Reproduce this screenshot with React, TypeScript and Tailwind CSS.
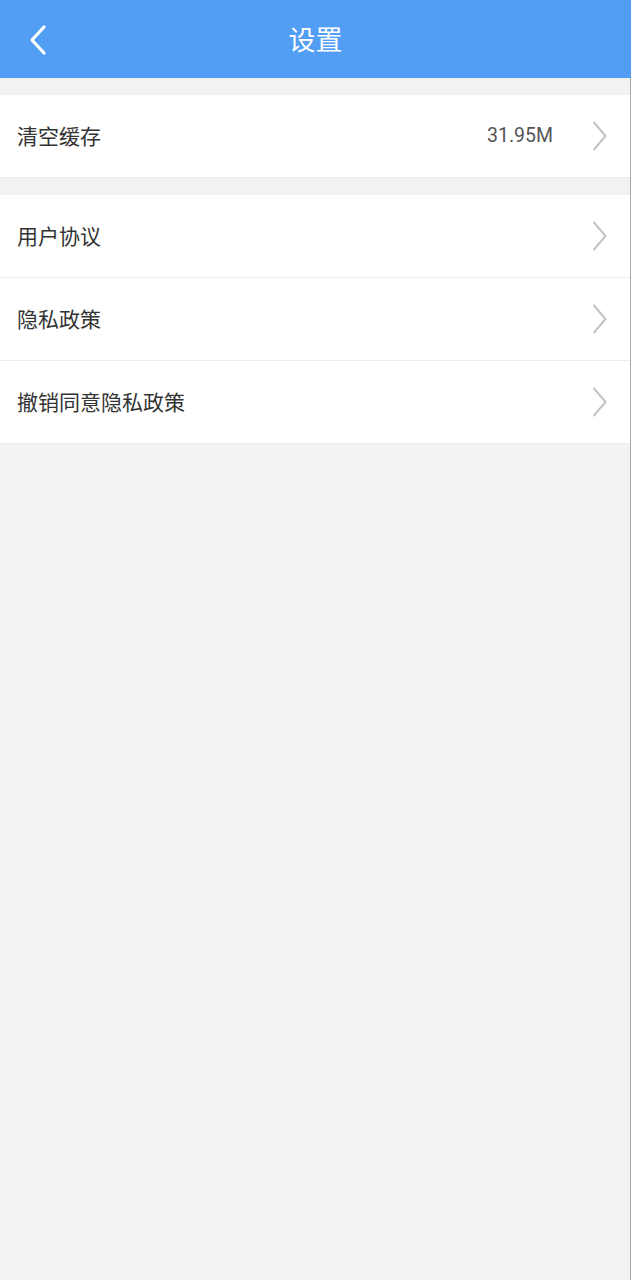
import React from "react";

const Chevron = () => (
  <svg width="16" height="30" viewBox="0 0 16 30" className="shrink-0">
    <path d="M2 1.5 L13.5 15 L2 28.5" fill="none" stroke="#c4c4c4" strokeWidth="2" strokeLinecap="round" strokeLinejoin="round" />
  </svg>
);

const Row = ({ label, value }: { label: string; value?: string }) => (
  <div className="flex h-[83px] items-center border-b border-[#ececec] bg-white pl-[17px] pr-[22px]">
    <span className="flex-1 text-[21px] text-[#333333]">{label}</span>
    {value && <span className="mr-[39px] text-[19.5px] text-[#555555] font-['Roboto',sans-serif]">{value}</span>}
    <Chevron />
  </div>
);

export default function App() {
  return (
    <div className="flex min-h-[1280px] w-[631px] flex-col bg-[#f2f3f1] font-['Noto_Sans_CJK_SC','Noto_Sans',sans-serif]">
      <div className="relative flex h-[78px] items-center justify-center bg-[#529ef5]">
        <svg width="20" height="32" viewBox="0 0 20 32" className="absolute left-[28px] top-[24px]">
          <path d="M16 3 L4 16 L16 29" fill="none" stroke="#ffffff" strokeWidth="3.2" strokeLinecap="round" strokeLinejoin="round" />
        </svg>
        <span className="text-[27px] text-white">设置</span>
      </div>
      <div className="flex flex-1 flex-col border-r border-[#a9a9a9]">
        <div className="mt-[17px]">
          <Row label="清空缓存" value="31.95M" />
        </div>
        <div className="mt-[17px]">
          <Row label="用户协议" />
          <Row label="隐私政策" />
          <Row label="撤销同意隐私政策" />
        </div>
      </div>
    </div>
  );
}
